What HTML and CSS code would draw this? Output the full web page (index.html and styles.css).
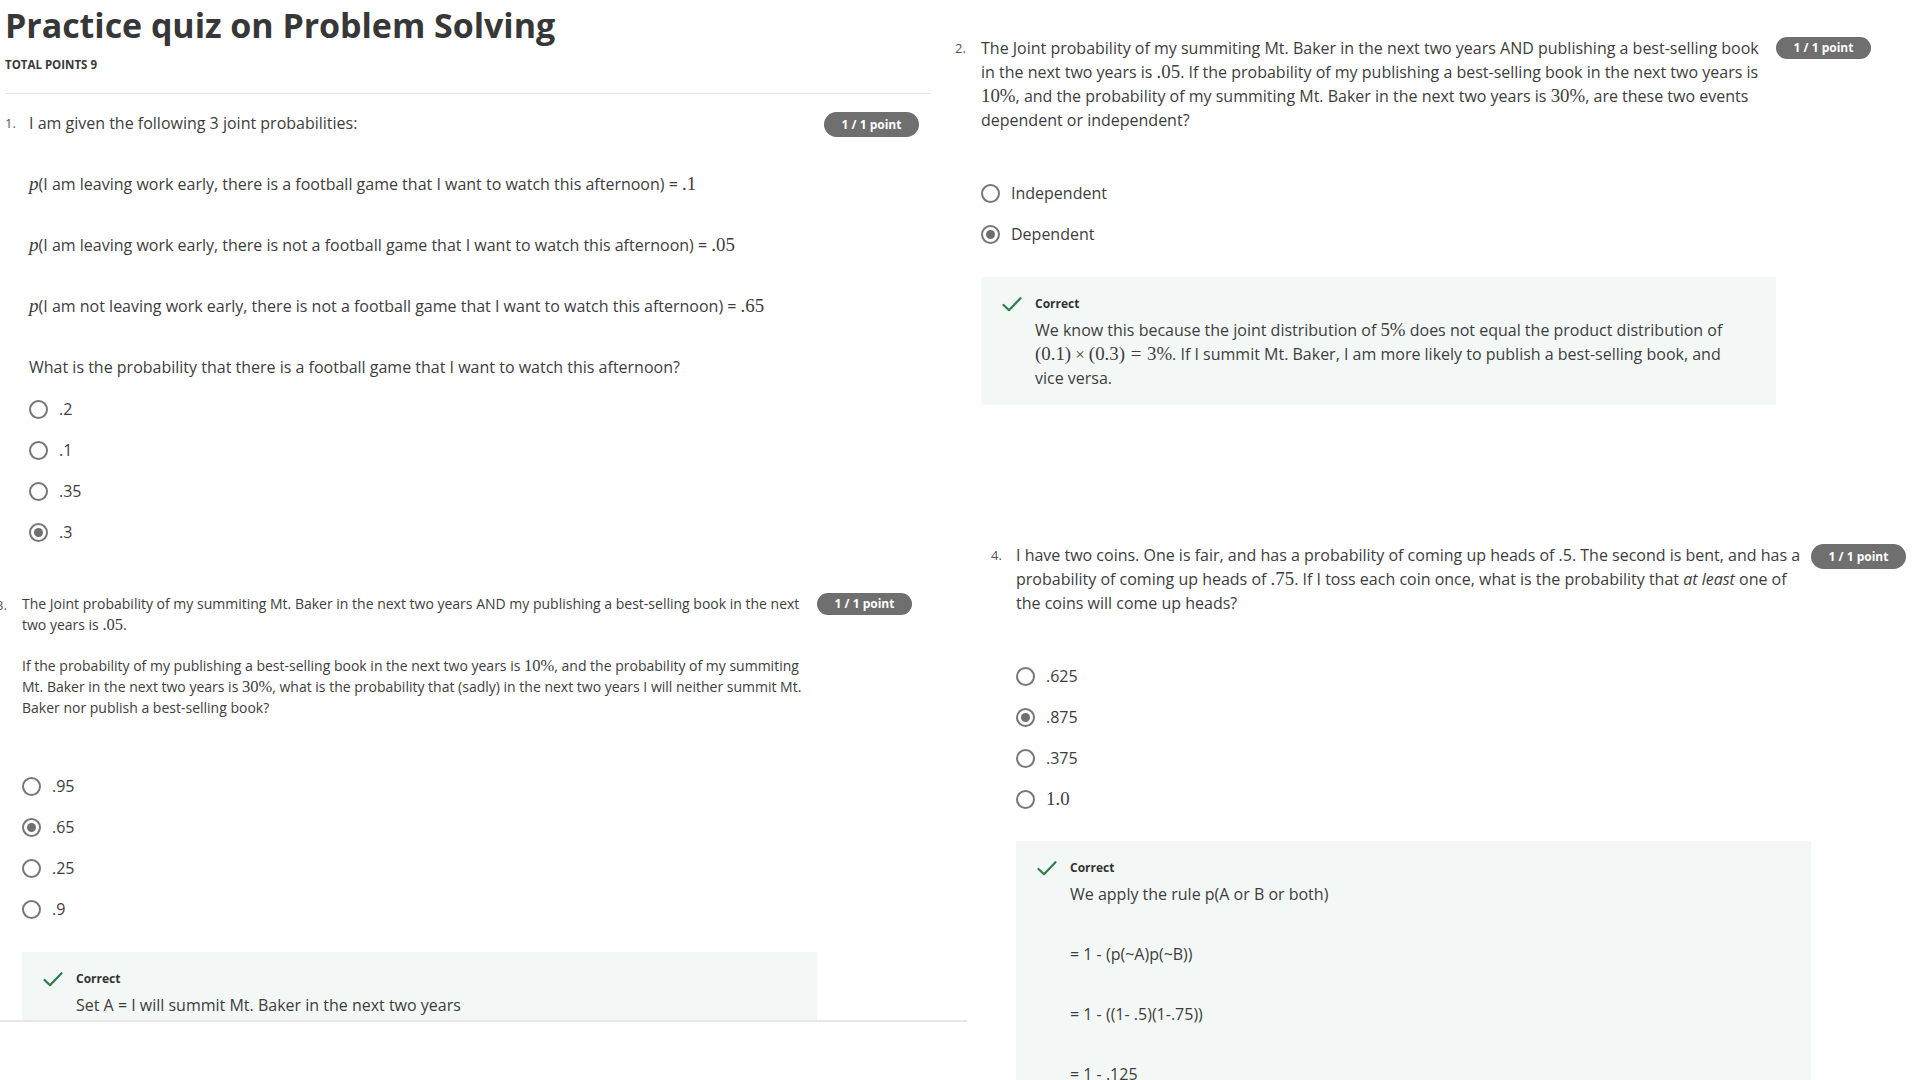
FILE: index.html
```html
<!DOCTYPE html>
<html lang="en">
<head>
<meta charset="utf-8">
<title>Practice quiz on Problem Solving</title>
<link rel="stylesheet" href="styles.css">
</head>
<body>
<div class="page">
  <div class="col-left">
    <header class="quiz-head">
      <h1 class="quiz-title">Practice quiz on Problem Solving</h1>
      <div class="total-points">Total points 9</div>
      <div class="head-rule"></div>
    </header>

    <section class="q q1">
      <div class="q-num">1.</div>
      <div class="q-body">
        <div class="prompt">
          <p>I am given the following 3 joint probabilities:</p>
          <p class="sp"><span class="mi">p</span>(I am leaving work early, there is a football game that I want to watch this afternoon) = <span class="mn">.1</span></p>
          <p class="sp"><span class="mi">p</span>(I am leaving work early, there is not a football game that I want to watch this afternoon) = <span class="mn">.05</span></p>
          <p class="sp"><span class="mi">p</span>(I am not leaving work early, there is not a football game that I want to watch this afternoon) = <span class="mn">.65</span></p>
          <p class="sp">What is the probability that there is a football game that I want to watch this afternoon?</p>
        </div>
        <div class="options opt-q1">
          <div class="opt"><span class="radio"></span><span>.2</span></div>
          <div class="opt"><span class="radio"></span><span>.1</span></div>
          <div class="opt"><span class="radio"></span><span>.35</span></div>
          <div class="opt"><span class="radio on"></span><span>.3</span></div>
        </div>
      </div>
      <div class="badge">1 / 1 point</div>
    </section>

    <section class="q q3">
      <div class="q-num">3.</div>
      <div class="q-body">
        <div class="prompt small">
          <p>The Joint probability of my summiting Mt. Baker in the next two years AND my publishing a best-selling book in the next two years is <span class="mn">.05</span>.</p>
          <p class="sp-small">If the probability of my publishing a best-selling book in the next two years is <span class="mn">10%</span>, and the probability of my summiting Mt. Baker in the next two years is <span class="mn">30%</span>, what is the probability that (sadly) in the next two years I will neither summit Mt. Baker nor publish a best-selling book?</p>
        </div>
        <div class="options opt-q3">
          <div class="opt"><span class="radio"></span><span>.95</span></div>
          <div class="opt"><span class="radio on"></span><span>.65</span></div>
          <div class="opt"><span class="radio"></span><span>.25</span></div>
          <div class="opt"><span class="radio"></span><span>.9</span></div>
        </div>
        <div class="feedback">
          <svg class="check" width="20" height="15" viewBox="0 0 20 15"><polyline points="1.5,8 7,13.2 18.5,1.2" fill="none" stroke="#2f7d4c" stroke-width="2.2" stroke-linecap="round" stroke-linejoin="round"/></svg>
          <div class="fb-title">Correct</div>
          <div class="fb-body">
            <p>Set A = I will summit Mt. Baker in the next two years</p>
          </div>
        </div>
      </div>
      <div class="badge">1 / 1 point</div>
    </section>
  </div>

  <div class="col-right">
    <section class="q q2">
      <div class="q-num">2.</div>
      <div class="q-body">
        <div class="prompt">
          <p>The Joint probability of my summiting Mt. Baker in the next two years AND publishing a best-selling book in the next two years is <span class="mn">.05</span>. If the probability of my publishing a best-selling book in the next two years is <span class="mn">10%</span>, and the probability of my summiting Mt. Baker in the next two years is <span class="mn">30%</span>, are these two events dependent or independent?</p>
        </div>
        <div class="options opt-q2">
          <div class="opt"><span class="radio"></span><span>Independent</span></div>
          <div class="opt"><span class="radio on"></span><span>Dependent</span></div>
        </div>
        <div class="feedback fb-q2">
          <svg class="check" width="20" height="15" viewBox="0 0 20 15"><polyline points="1.5,8 7,13.2 18.5,1.2" fill="none" stroke="#2f7d4c" stroke-width="2.2" stroke-linecap="round" stroke-linejoin="round"/></svg>
          <div class="fb-title">Correct</div>
          <div class="fb-body">
            <p>We know this because the joint distribution of <span class="mn">5%</span> does not equal the product distribution of <span class="mn">(0.1)<span class="op">×</span>(0.3)<span class="rel">=</span>3%</span>. If I summit Mt. Baker, I am more likely to publish a best-selling book, and vice versa.</p>
          </div>
        </div>
      </div>
      <div class="badge">1 / 1 point</div>
    </section>

    <section class="q q4">
      <div class="q-num">4.</div>
      <div class="q-body">
        <div class="prompt">
          <p>I have two coins. One is fair, and has a probability of coming up heads of .5. The second is bent, and has a probability of coming up heads of <span class="mn">.75</span>. If I toss each coin once, what is the probability that <em>at least</em> one of the coins will come up heads?</p>
        </div>
        <div class="options opt-q4">
          <div class="opt"><span class="radio"></span><span>.625</span></div>
          <div class="opt"><span class="radio on"></span><span>.875</span></div>
          <div class="opt"><span class="radio"></span><span>.375</span></div>
          <div class="opt"><span class="radio"></span><span class="mn">1.0</span></div>
        </div>
        <div class="feedback fb-q4">
          <svg class="check" width="20" height="15" viewBox="0 0 20 15"><polyline points="1.5,8 7,13.2 18.5,1.2" fill="none" stroke="#2f7d4c" stroke-width="2.2" stroke-linecap="round" stroke-linejoin="round"/></svg>
          <div class="fb-title">Correct</div>
          <div class="fb-body">
            <p>We apply the rule p(A or B or both)</p>
            <p class="sp-fb">= 1 - (p(~A)p(~B))</p>
            <p class="sp-fb">= 1 - ((1- .5)(1-.75))</p>
            <p class="sp-fb">= 1 - .125</p>
          </div>
        </div>
      </div>
      <div class="badge">1 / 1 point</div>
    </section>
  </div>
</div>
</body>
</html>
```

FILE: styles.css
```css
html, body {
  margin: 0;
  padding: 0;
  background: #ffffff;
}

body {
  width: 1920px;
  height: 1080px;
  overflow: hidden;
  font-family: "Open Sans", "Liberation Sans", sans-serif;
  font-size: 16px;
  color: #3d3d3d;
}

p {
  margin: 0;
}

.page {
  display: flex;
  align-items: flex-start;
  height: 1080px;
  overflow: hidden;
}

/* ---------- left collage column ---------- */
.col-left {
  flex: none;
  width: 967px;
  height: 1020px;
  overflow: hidden;
  border-bottom: 2px solid #e8e8e8;
}

.quiz-head {
  padding: 5px 0 0 5px;
}

.quiz-title {
  margin: 0;
  font-size: 34px;
  line-height: 40px;
  font-weight: 700;
  color: #373737;
  letter-spacing: -0.05px;
}

.total-points {
  margin-top: 12px;
  font-size: 11.5px;
  line-height: 16px;
  font-weight: 700;
  text-transform: uppercase;
  color: #3a3a3a;
}

.head-rule {
  margin-top: 20px;
  width: 926px;
  height: 1px;
  background: #e1e1e1;
}

/* ---------- question ---------- */
.q {
  display: grid;
  grid-template-columns: 24px 795px 95px;
  align-items: start;
}

.q-num {
  font-size: 13px;
  line-height: 24px;
  color: #555555;
}

.q-body {
  min-width: 0;
}

.prompt p {
  line-height: 24px;
}

.prompt .sp {
  margin-top: 37px;
}

.prompt.small p {
  font-size: 14px;
  line-height: 21px;
}

.prompt .sp-small {
  margin-top: 20px;
}

.mi {
  font-family: "Liberation Serif", "DejaVu Serif", serif;
  font-style: italic;
  font-size: 1.2em;
  line-height: 1;
}

.mn {
  font-family: "Liberation Serif", "DejaVu Serif", serif;
  font-size: 1.18em;
  line-height: 1;
}

.mn .op {
  margin: 0 0.24em;
  font-size: 0.9em;
}

.mn .rel {
  margin: 0 0.3em;
}

em {
  font-style: italic;
}

.badge {
  width: 95px;
  height: 25px;
  border-radius: 13px;
  background: #6f6f6f;
  color: #ffffff;
  font-size: 12px;
  font-weight: 700;
  line-height: 25px;
  text-align: center;
}

/* ---------- options ---------- */
.options {
  display: flex;
  flex-direction: column;
  gap: 17px;
}

.opt {
  display: flex;
  align-items: center;
  gap: 11px;
  height: 24px;
  line-height: 24px;
  font-size: 16px;
  color: #3d3d3d;
}

.radio {
  flex: none;
  box-sizing: border-box;
  width: 19px;
  height: 19px;
  border: 2px solid #777777;
  border-radius: 50%;
  display: flex;
  align-items: center;
  justify-content: center;
}

.radio.on::after {
  content: "";
  width: 9px;
  height: 9px;
  border-radius: 50%;
  background: #6f6f6f;
}

/* ---------- feedback ---------- */
.feedback {
  display: grid;
  grid-template-columns: 33px 1fr;
  padding: 18px 24px 15px 21px;
  background: #f3f8f6;
}

.check {
  grid-column: 1;
  grid-row: 1;
  align-self: center;
}

.fb-title {
  grid-column: 2;
  grid-row: 1;
  font-size: 12px;
  line-height: 18px;
  font-weight: 700;
  color: #333333;
}

.fb-body {
  grid-column: 2;
  grid-row: 2;
  margin-top: 5px;
}

.fb-body p {
  line-height: 24px;
}

.fb-body .sp-fb {
  margin-top: 36px;
}

/* ---------- placements ---------- */
.q1 {
  margin: 17px 0 0 5px;
}

.q1 .badge {
  margin-top: 1px;
}

.opt-q1 {
  margin-top: 18px;
}

.q3 {
  margin: 49px 0 0 -4px;
  grid-template-columns: 26px 795px 95px;
}

.q3 .badge {
  margin-top: 0;
  height: 22px;
  line-height: 22px;
}

.opt-q3 {
  margin-top: 56px;
}

.q3 .feedback {
  margin-top: 31px;
}

.col-right {
  flex: 1;
  height: 1080px;
  overflow: hidden;
  margin-left: -12px;
}

.q2 {
  margin-top: 36px;
  grid-template-columns: 26px 795px 95px;
}

.q2 .badge {
  margin-top: 1px;
  height: 22px;
  line-height: 22px;
}

.opt-q2 {
  margin-top: 49px;
}

.fb-q2 {
  margin-top: 31px;
}

.q4 {
  margin: 138px 0 0 36px;
  grid-template-columns: 25px 795px 95px;
}

.q4 .badge {
  margin-top: 1px;
}

.opt-q4 {
  margin-top: 49px;
}

.fb-q4 {
  margin-top: 30px;
}
```
